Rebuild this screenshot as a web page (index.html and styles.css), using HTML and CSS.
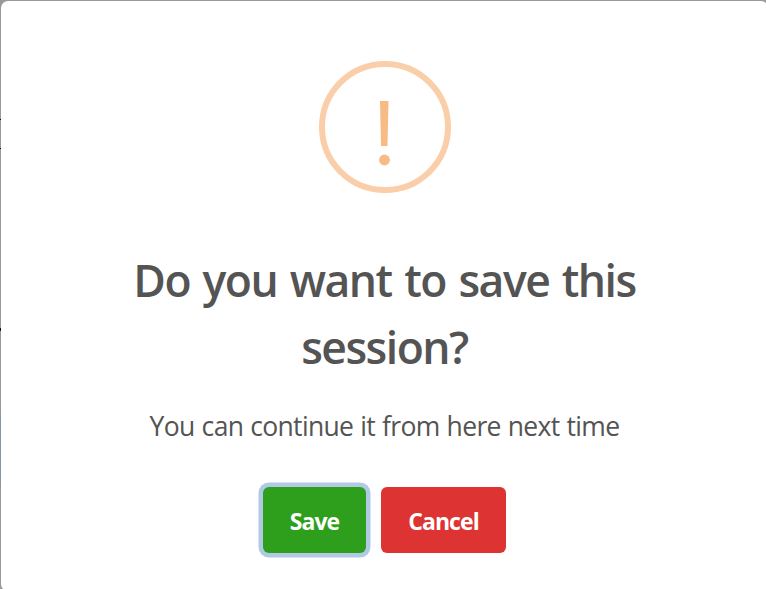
FILE: index.html
```
<!DOCTYPE html>
<html lang="en">
<head>
<meta charset="utf-8">
<title>Save session</title>
<link rel="stylesheet" href="styles.css">
</head>
<body>
<main class="modal" role="dialog" aria-labelledby="title">
  <svg class="icon" viewBox="0 0 132 132" aria-hidden="true">
    <circle cx="66" cy="66" r="63" fill="none" stroke="#facea8" stroke-width="6"/>
    <path d="M61 40h8.500l-1 45h-6.500z" fill="#f8bb86"/>
    <circle cx="65.500" cy="99" r="5.400" fill="#f8bb86"/>
  </svg>
  <h1 class="title" id="title"><span class="line">Do you want to save this</span> <span class="line line-last">session?</span></h1>
  <p class="message">You can continue it from here next time</p>
  <div class="actions">
    <button class="button save">Save</button>
    <button class="button cancel">Cancel</button>
  </div>
</main>
</body>
</html>
```
FILE: styles.css
```
* { box-sizing: border-box; }
html, body { margin: 0; height: 100%; overflow: hidden; }
body {
  background:
    linear-gradient(#111, #111) 0 119px / 1px 1px no-repeat,
    linear-gradient(#111, #111) 0 148px / 1px 1px no-repeat,
    linear-gradient(#111, #111) 0 328px / 1px 3px no-repeat,
    linear-gradient(#8797a5, #8797a5) 0 414px / 1px 72px no-repeat,
    #999;
  font-family: "Open Sans", "Noto Sans", sans-serif;
}
.modal {
  width: 767px;
  height: 590px;
  margin: 1px 0 0 1px;
  padding-top: 60px;
  border-radius: 7px;
  background: #fff;
  display: flex;
  flex-direction: column;
  align-items: center;
}
.icon { width: 132px; height: 132px; flex: none; }
.title {
  margin: 53px 0 0;
  color: #545454;
  font-size: 44.500px;
  font-weight: 560;
  line-height: 67px;
  text-align: center;
  white-space: nowrap;
}
.line { display: block; letter-spacing: -1.500px; word-spacing: 2.400px; }
.message {
  margin: 26px 0 0;
  color: #545454;
  font-size: 26.500px;
  line-height: 40px;
  letter-spacing: -0.680px;
  word-spacing: 0.830px;
  white-space: nowrap;
}
.actions { display: flex; gap: 15px; margin-top: 41px; }
.button {
  height: 66px;
  padding: 2px 0 0;
  border: 0;
  border-radius: 6px;
  color: #fff;
  font: 700 23px "Open Sans", sans-serif;
  letter-spacing: -0.900px;
}
.save { width: 103px; background: #2d9f1d; box-shadow: 0 0 0 4.500px #b0cae5; }
.cancel { width: 125px; background: #de3333; }
```
